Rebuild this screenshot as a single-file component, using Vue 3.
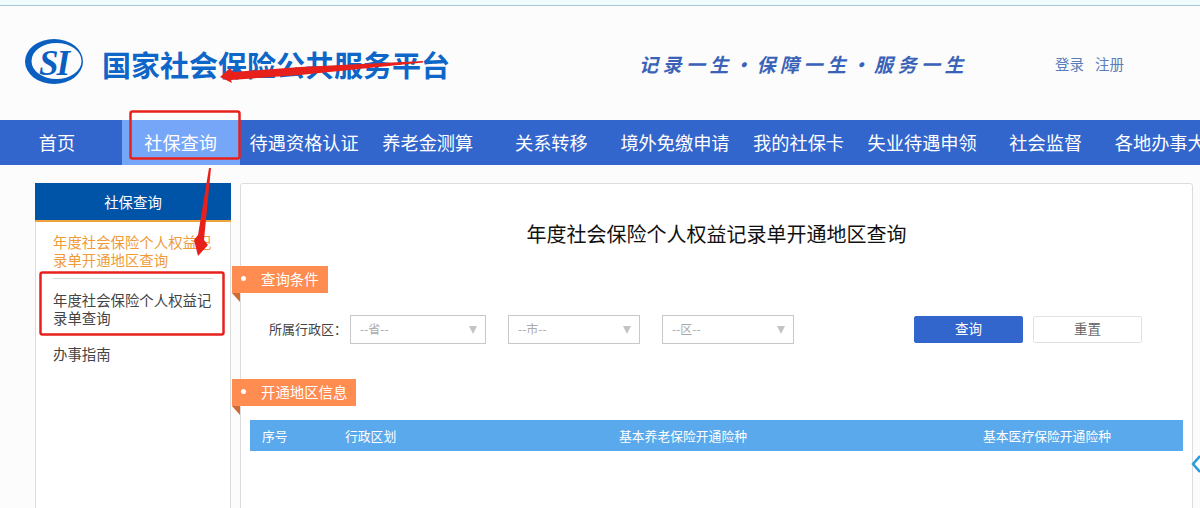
<script setup>
const navItems = ['首页', '社保查询', '待遇资格认证', '养老金测算', '关系转移', '境外免缴申请', '我的社保卡', '失业待遇申领', '社会监督', '各地办事大厅']
const sideItems = ['年度社会保险个人权益记录单开通地区查询', '年度社会保险个人权益记录单查询', '办事指南']
const selects = ['--省--', '--市--', '--区--']
</script>

<template>
  <div class="page">
    <div class="top_strip"></div>

    <header class="header">
      <svg class="logo" width="58" height="46" viewBox="0 0 58 46">
        <path fill-rule="evenodd" d="M0 22.500A29 22.500 0 1 0 58 22.500A29 22.500 0 1 0 0 22.500ZM6.500 22A25 18 0 1 1 56.500 22A25 18 0 1 1 6.500 22Z" fill="#0b5fc0" />
        <text x="14" y="36" class="logo_text">SI</text>
      </svg>
      <h1 class="site_title">国家社会保险公共服务平台</h1>
      <div class="slogan">记录一生•保障一生•服务一生</div>
      <div class="links"><a>登录</a><a>注册</a></div>
    </header>

    <nav class="nav">
      <a v-for="(item, i) in navItems" :key="item" class="nav_item" :class="{ active: i === 1 }">{{ item }}</a>
    </nav>

    <div class="content">
      <aside class="sidebar">
        <div class="side_title">社保查询</div>
        <ul class="side_list">
          <li v-for="(item, i) in sideItems" :key="item" :class="{ current: i === 0 }">{{ item }}</li>
        </ul>
      </aside>

      <main class="panel">
        <h2 class="panel_title">年度社会保险个人权益记录单开通地区查询</h2>

        <div class="tag"><i></i>查询条件</div>
        <div class="form_row">
          <label>所属行政区：</label>
          <div v-for="s in selects" :key="s" class="select">
            <span>{{ s }}</span>
            <b></b>
          </div>
          <button class="btn primary">查询</button>
          <button class="btn">重置</button>
        </div>

        <div class="tag second"><i></i>开通地区信息</div>
        <div class="table_head">
          <span class="col_no">序号</span>
          <span class="col_area">行政区划</span>
          <span class="col_a">基本养老保险开通险种</span>
          <span class="col_b">基本医疗保险开通险种</span>
        </div>
      </main>
    </div>

    <svg class="chevron" width="10" height="20" viewBox="0 0 10 20">
      <path d="M9 2L2 10L9 18" fill="none" stroke="#2a9bd8" stroke-width="2.500" />
    </svg>

    <!-- red marks drawn over the page -->
    <svg class="marks" width="1200" height="508" viewBox="0 0 1200 508">
      <rect x="130.500" y="111.500" width="109" height="47" rx="2" fill="none" stroke="#e8201c" stroke-width="2.500" />
      <rect x="40.500" y="272.500" width="183" height="62" rx="2" fill="none" stroke="#e8201c" stroke-width="2.500" />
      <polygon points="423,61 300,67 233,72 230,68 220,77 232,83 231,80 300,75 423,62.500" fill="#e8201c" />
      <polygon points="209,168 211,168 204,240 208,245 198,256 194,240 198,235" fill="#e8201c" />
    </svg>
  </div>
</template>

<style scoped>
.page {
  position: relative;
  width: 1200px;
  height: 508px;
  overflow: hidden;
  background: #fcfcfc;
  font-family: "Noto Sans CJK SC", "Liberation Sans", sans-serif;
}

.top_strip {
  height: 5px;
  background: #effbfd;
  border-bottom: 1px solid #a9c6d4;
}

.header {
  display: flex;
  align-items: center;
  height: 114px;
  padding-left: 25px;
}

.logo {
  margin-top: -3px;
}

.logo_text {
  font-family: "Liberation Serif", serif;
  font-style: italic;
  font-weight: 700;
  font-size: 35px;
  fill: #0b5fc0;
  letter-spacing: -2px;
}

.site_title {
  margin: 0 0 -2px 19px;
  font-size: 29px;
  line-height: 40px;
  font-weight: 700;
  color: #0d66c8;
  white-space: nowrap;
  width: 348px;
}

.slogan {
  margin-left: 189px;
  width: 336px;
  font-size: 19px;
  font-style: italic;
  font-weight: 700;
  letter-spacing: 4.500px;
  color: #3a63b8;
  white-space: nowrap;
}

.links {
  margin-left: 80px;
  display: flex;
  gap: 11px;
  font-size: 14.500px;
  color: #5a7dbb;
}

.nav {
  display: flex;
  gap: 5.600px;
  height: 45px;
  background: #3366cc;
  overflow: hidden;
}

.nav_item {
  flex: 0 0 118px;
  text-align: center;
  font-size: 18.200px;
  line-height: 45px;
  color: #fff;
  white-space: nowrap;
}

.nav_item:first-child {
  margin-left: -2px;
}

.nav_item.active {
  background: #75a6f7;
}

.content {
  display: flex;
  align-items: flex-start;
  gap: 9px;
  padding: 18px 7px 0 35px;
}

.sidebar {
  width: 196px;
  height: 340px;
  background: #fff;
  border: 1px solid #dcdcdc;
  border-radius: 2px;
  box-sizing: border-box;
}

.side_title {
  height: 37px;
  margin: -1px -1px 0;
  background: #0054a8;
  border-bottom: 2px solid #f0a23c;
  text-align: center;
  font-size: 14.400px;
  line-height: 37px;
  color: #fff;
}

.side_list {
  list-style: none;
  margin: 0;
  padding: 0 17px;
  font-size: 14.400px;
  line-height: 18px;
  color: #444;
}

.side_list li {
  padding: 12px 0 6px;
}

.side_list li.current {
  padding: 11px 0 9px;
  border-bottom: 1px solid #d8d8d8;
  color: #f09a38;
}

.panel {
  position: relative;
  flex: 1;
  height: 340px;
  background: #fff;
  border: 1px solid #dcdcdc;
  border-radius: 3px;
  box-sizing: border-box;
}

.panel_title {
  margin: 35px 0 0;
  text-align: center;
  font-size: 20px;
  line-height: 30px;
  font-weight: 400;
  color: #111;
}

.tag {
  position: relative;
  display: flex;
  align-items: center;
  width: fit-content;
  height: 25px;
  margin: 17px 0 0 -9px;
  padding: 0 9px 2px 29px;
  background: #ff8c50;
  font-size: 14.400px;
  color: #fff;
}

.tag i {
  position: absolute;
  left: 9px;
  top: 10px;
  width: 5px;
  height: 5px;
  border-radius: 50%;
  background: #fff;
}

.tag::after {
  content: "";
  position: absolute;
  left: 0;
  top: 27px;
  border-top: 9px solid #cf6a33;
  border-left: 8px solid transparent;
}

.tag.second {
  margin-top: 35px;
}

.form_row {
  display: flex;
  align-items: center;
  height: 29px;
  margin: 22px 0 0 28px;
  font-size: 13px;
  color: #444;
}

.form_row label {
  width: 81px;
  margin-top: -2px;
  white-space: nowrap;
}

.select {
  position: relative;
  width: 132px;
  height: 29px;
  margin-right: 22px;
  outline: 1px solid #c8c8c8;
  outline-offset: -1px;
  font-size: 12px;
  line-height: 27px;
  color: #aaa;
}

.select:first-of-type {
  width: 136px;
}

.select span {
  margin-left: 10px;
}

.select b {
  position: absolute;
  right: 9px;
  top: 11px;
  border-top: 8px solid #c4c4c4;
  border-left: 4px solid transparent;
  border-right: 4px solid transparent;
}

.btn {
  width: 109px;
  height: 27px;
  margin-left: 10px;
  border: 1px solid #e2e2e2;
  border-radius: 2px;
  background: #fff;
  font-family: inherit;
  font-size: 13.500px;
  line-height: 23px;
  padding: 0 0 2px;
  color: #666;
}

.btn.primary {
  margin-left: 98px;
  border-color: #3366cc;
  background: #3366cc;
  color: #fff;
}

.table_head {
  position: relative;
  display: flex;
  align-items: center;
  height: 31px;
  margin: 14px 9px 0;
  background: #5aa9ec;
  font-size: 12.800px;
  color: #fff;
}

.table_head span {
  white-space: nowrap;
}

.col_no {
  width: 83px;
  padding-left: 12px;
  box-sizing: border-box;
}

.col_area {
  width: 274px;
  margin-left: 12px;
}

.col_a {
  width: 364px;
}

.col_b {
  width: 128px;
}

.chevron {
  position: absolute;
  left: 1191px;
  top: 454px;
}

.marks {
  position: absolute;
  left: 0;
  top: 0;
  pointer-events: none;
}
</style>

<style>
html, body {
  margin: 0;
  overflow: hidden;
}
</style>
